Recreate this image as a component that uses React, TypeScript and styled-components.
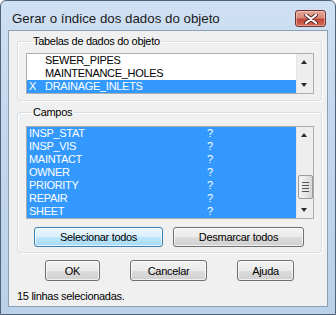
import React from "react";
import styled, { createGlobalStyle } from "styled-components";

const GlobalStyle = createGlobalStyle`
  * { box-sizing: border-box; }
  body {
    margin: 0;
    background: #ffffff;
    font-family: "Liberation Sans", Arial, sans-serif;
  }
`;

const tables = [
  { mark: "", name: "SEWER_PIPES", selected: false },
  { mark: "", name: "MAINTENANCE_HOLES", selected: false },
  { mark: "X", name: "DRAINAGE_INLETS", selected: true },
];

const fields = ["INSP_STAT", "INSP_VIS", "MAINTACT", "OWNER", "PRIORITY", "REPAIR", "SHEET"];

const App: React.FC = () => {
  return (
    <>
      <GlobalStyle />
      <Window>
        <TitleBar>
          <Title>Gerar o índice dos dados do objeto</Title>
          <CloseButton>
            <svg width="14" height="10" viewBox="0 0 14 10">
              <path
                d="M2 1 L12 9 M12 1 L2 9"
                stroke="#5a2a2a"
                strokeWidth="4"
                strokeLinecap="round"
              />
              <path
                d="M2 1 L12 9 M12 1 L2 9"
                stroke="#ffffff"
                strokeWidth="2.2"
                strokeLinecap="round"
              />
            </svg>
          </CloseButton>
        </TitleBar>
        <Client>
          <Group $top={4} $padTop={5} $padBottom={6}>
            <Legend>Tabelas de dados do objeto</Legend>
            <ListBox>
              <Rows>
                {tables.map((t) => (
                  <Row key={t.name} $selected={t.selected}>
                    <Mark>{t.mark}</Mark>
                    <span>{t.name}</span>
                  </Row>
                ))}
              </Rows>
              <ScrollBar>
                <Arrow $up />
                <Arrow />
              </ScrollBar>
            </ListBox>
          </Group>

          <Group $top={5} $padTop={7} $padBottom={5}>
            <Legend>Campos</Legend>
            <ListBox>
              <Rows>
                {fields.map((f) => (
                  <Row key={f} $selected>
                    <FieldName>{f}</FieldName>
                    <span>?</span>
                  </Row>
                ))}
              </Rows>
              <ScrollBar>
                <Arrow $up />
                <Track>
                  <Thumb>
                    <Grip />
                    <Grip />
                    <Grip />
                    <Grip />
                  </Thumb>
                </Track>
                <Arrow />
              </ScrollBar>
            </ListBox>
            <GroupButtons>
              <Button $w={129} $h={20} $hot>
                Selecionar todos
              </Button>
              <Button $w={131} $h={20}>
                Desmarcar todos
              </Button>
            </GroupButtons>
          </Group>

          <DialogButtons>
            <Button $w={55} $h={21}>OK</Button>
            <Button $w={77} $h={21}>Cancelar</Button>
            <Button $w={57} $h={21}>Ajuda</Button>
          </DialogButtons>

          <Status>15 linhas selecionadas.</Status>
        </Client>
      </Window>
    </>
  );
};

export default App;

const Window = styled.div`
  width: 336px;
  height: 315px;
  display: flex;
  flex-direction: column;
  border: 1px solid #4f6378;
  border-radius: 6px 6px 0 0;
  background: linear-gradient(180deg, #cfe0f3 0%, #c3d7ee 40%, #bad1ea 100%);
  overflow: hidden;
`;

const TitleBar = styled.div`
  height: 29px;
  flex: none;
  display: flex;
  align-items: flex-start;
  justify-content: space-between;
  padding: 9px 9px 0 11px;
`;

const Title = styled.div`
  font-family: "Liberation Sans", Arial, sans-serif;
  font-size: 13.3px;
  line-height: 16px;
  color: #1b1b1b;
  margin-top: 1px;
`;

const CloseButton = styled.div`
  width: 31px;
  height: 17px;
  display: flex;
  align-items: center;
  justify-content: center;
  border: 1px solid #6e3434;
  border-radius: 3px;
  background: linear-gradient(180deg, #e7a797 0%, #d78a78 45%, #c0463a 55%, #cf6a55 100%);
  box-shadow: inset 0 0 0 1px rgba(255, 220, 210, 0.5);
`;

const Client = styled.div`
  flex: 1;
  margin: 0 7px 7px;
  background: #f0f0f0;
  border: 1px solid #8da0b6;
  display: flex;
  flex-direction: column;
  font-size: 11px;
  letter-spacing: -0.3px;
  color: #000;
`;

const Group = styled.fieldset<{ $top: number; $padTop: number; $padBottom: number }>`
  margin: ${(p) => p.$top}px 5px 0 8px;
  padding: ${(p) => p.$padTop}px 7px ${(p) => p.$padBottom}px 8px;
  border: 1px solid #d5dfe5;
  border-radius: 3px;
  box-shadow: inset 1px 1px 0 #ffffff, 1px 1px 0 #ffffff;
  min-width: 0;
`;

const Legend = styled.legend`
  padding: 0 2px 0 1px;
  margin-left: 6px;
  line-height: 13px;
  font-size: 11px;
`;

const ListBox = styled.div`
  display: flex;
  background: #ffffff;
  border: 1px solid #a8acb3;
`;

const Rows = styled.div`
  flex: 1;
  display: flex;
  flex-direction: column;
`;

const Row = styled.div<{ $selected?: boolean }>`
  height: 13px;
  line-height: 13px;
  display: flex;
  padding-left: 2px;
  white-space: nowrap;
  background: ${(p) => (p.$selected ? "#3399ff" : "transparent")};
  color: ${(p) => (p.$selected ? "#ffffff" : "#000000")};
`;

const Mark = styled.span`
  width: 16px;
  flex: none;
`;

const FieldName = styled.span`
  width: 178px;
  flex: none;
`;

const ScrollBar = styled.div`
  width: 17px;
  flex: none;
  display: flex;
  flex-direction: column;
  justify-content: space-between;
  background: #eeeeee;
  border-left: 1px solid #e4e4e4;
`;

const Arrow = styled.div<{ $up?: boolean }>`
  height: 17px;
  flex: none;
  position: relative;
  &::after {
    content: "";
    position: absolute;
    left: 4px;
    top: ${(p) => (p.$up ? "6px" : "7px")};
    border-left: 3.5px solid transparent;
    border-right: 3.5px solid transparent;
    ${(p) => (p.$up ? "border-bottom: 4px solid #2a2a2a;" : "border-top: 4px solid #2a2a2a;")}
  }
`;

const Track = styled.div`
  flex: 1;
  display: flex;
  flex-direction: column;
  justify-content: flex-end;
  padding-bottom: 2px;
`;

const Thumb = styled.div`
  height: 24px;
  margin: 0 0 0 1px;
  width: 15px;
  border: 1px solid #9a9a9a;
  border-radius: 2px;
  background: linear-gradient(90deg, #f3f3f3 0%, #e6e6e6 55%, #d6d6d6 100%);
  display: flex;
  flex-direction: column;
  align-items: center;
  justify-content: center;
  gap: 2px;
`;

const Grip = styled.div`
  width: 7px;
  height: 1px;
  background: #555;
`;

const GroupButtons = styled.div`
  display: flex;
  gap: 10px;
  margin-top: 8px;
  padding-left: 8px;
`;

const DialogButtons = styled.div`
  display: flex;
  gap: 30px;
  margin-top: 7px;
  padding-left: 36px;
`;

const Button = styled.button<{ $w: number; $h: number; $hot?: boolean }>`
  width: ${(p) => p.$w}px;
  height: ${(p) => p.$h}px;
  padding: 0;
  font-family: "Liberation Sans", Arial, sans-serif;
  font-size: 11px;
  letter-spacing: -0.3px;
  color: #000;
  border-radius: 3px;
  border: 1px solid ${(p) => (p.$hot ? "#3c7fb1" : "#707070")};
  background: ${(p) =>
    p.$hot
      ? "linear-gradient(180deg, #eaf6fd 0%, #d9f0fc 50%, #bee6fd 51%, #a7d9f5 100%)"
      : "linear-gradient(180deg, #f2f2f2 0%, #ebebeb 50%, #dddddd 51%, #cfcfcf 100%)"};
  box-shadow: inset 0 0 0 1px rgba(255, 255, 255, 0.7);
`;

const Status = styled.div`
  margin: 9px 0 0 8px;
  line-height: 13px;
`;
